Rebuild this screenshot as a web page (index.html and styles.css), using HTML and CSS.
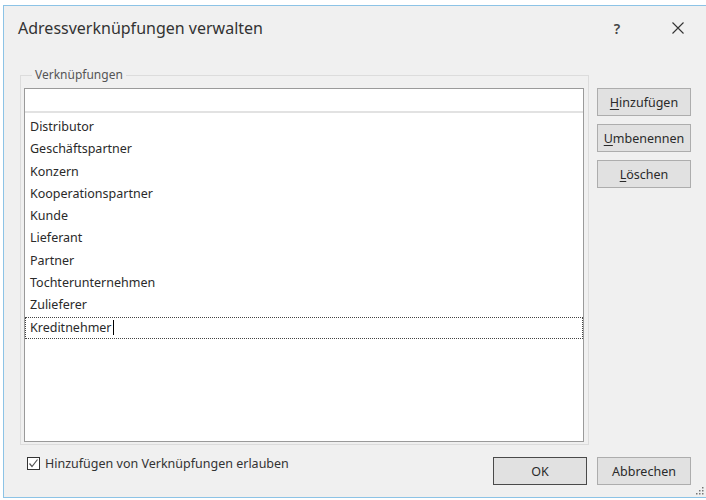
FILE: index.html
```html
<!DOCTYPE html>
<html lang="de">
<head>
<meta charset="utf-8">
<title>Adressverknüpfungen verwalten</title>
<link rel="stylesheet" href="styles.css">
</head>
<body>
<div class="window">
  <div class="titlebar">
    <span class="title">Adressverknüpfungen verwalten</span>
    <span class="help">?</span>
    <span class="close">
      <svg width="12" height="12" viewBox="0 0 12 12"><path d="M0.5 0.5 L11.5 11.5 M11.5 0.5 L0.5 11.5" stroke="#333" stroke-width="1.1" fill="none"/></svg>
    </span>
  </div>
  <div class="content">
    <div class="main">
      <fieldset class="group">
        <legend>Verknüpfungen</legend>
        <div class="listbox">
          <div class="edit"></div>
          <ul class="items">
            <li>Distributor</li>
            <li>Geschäftspartner</li>
            <li>Konzern</li>
            <li>Kooperationspartner</li>
            <li>Kunde</li>
            <li>Lieferant</li>
            <li>Partner</li>
            <li>Tochterunternehmen</li>
            <li>Zulieferer</li>
            <li class="editing">Kreditnehmer<span class="caret"></span></li>
          </ul>
        </div>
      </fieldset>
      <div class="side">
        <button class="btn"><u>H</u>inzufügen</button>
        <button class="btn"><u>U</u>mbenennen</button>
        <button class="btn"><u>L</u>öschen</button>
      </div>
    </div>
    <div class="footer">
      <label class="check">
        <span class="box"><svg width="11" height="11" viewBox="0 0 11 11"><path d="M1.5 5.5 L4 8.5 L9.5 1.5" stroke="#555" stroke-width="1.2" fill="none"/></svg></span>
        <span class="check-label">Hinzufügen von Verknüpfungen erlauben</span>
      </label>
      <div class="actions">
        <button class="btn default">OK</button>
        <button class="btn">Abbrechen</button>
      </div>
    </div>
  </div>
  <span class="grip">
    <svg width="8" height="8" viewBox="0 0 8 8" fill="#777">
      <rect x="6" y="0" width="1.5" height="1.5"/>
      <rect x="3" y="3" width="1.5" height="1.5"/><rect x="6" y="3" width="1.5" height="1.5"/>
      <rect x="0" y="6" width="1.5" height="1.5"/><rect x="3" y="6" width="1.5" height="1.5"/><rect x="6" y="6" width="1.5" height="1.5"/>
    </svg>
  </span>
</div>
</body>
</html>
```

FILE: styles.css
```css
* { box-sizing: border-box; }
html, body { margin: 0; padding: 0; background: #ffffff; }
body {
  font-family: "Noto Sans", "Open Sans", sans-serif;
  color: #222;
}
.window {
  position: relative;
  margin: 5px 0 0 3px;
  width: 703px;
  height: 493px;
  background: #f0f0f0;
  border-top: 1px solid #8cc3e6;
  border-left: 1px solid #8cc3e6;
  border-bottom: 1px solid #8cc3e6;
  display: flex;
  flex-direction: column;
}
.titlebar {
  height: 44px;
  display: flex;
  align-items: center;
  padding-left: 14px;
  padding-right: 5px;
}
.title {
  flex: 1;
  font-size: 16px;
  color: #333;
}
.help {
  width: 46px;
  text-align: center;
  font-size: 14px;
  font-weight: 600;
  color: #444;
  margin-right: 16px;
  padding-left: 2px;
}
.close {
  width: 46px;
  display: flex;
  justify-content: center;
  align-items: center;
}
.content {
  padding: 0 15px 0 16px;
  display: flex;
  flex-direction: column;
}
.main {
  display: flex;
  gap: 8px;
  margin-top: 18px;
}
.group {
  flex: 1;
  margin: 0;
  border: 1px solid #dcdcdc;
  padding: 6px 4px 2px 3px;
  min-width: 0;
}
.group legend {
  font-size: 12px;
  line-height: 14px;
  color: #555;
  padding: 0 3px;
  margin-left: 8px;
}
.listbox {
  height: 354px;
  background: #fff;
  border: 1px solid #9a9a9a;
  display: flex;
  flex-direction: column;
}
.edit {
  height: 24px;
  border-bottom: 2px solid #e2e2e2;
  flex: none;
}
.items {
  list-style: none;
  margin: 0;
  padding: 3px 0 0 0;
}
.items li {
  height: 22.3px;
  line-height: 22px;
  padding-left: 5px;
  font-size: 12.5px;
  color: #2a2a2a;
  white-space: nowrap;
}
.items li.editing {
  border: 1px dotted #444;
  padding-left: 4px;
  line-height: 20px;
}
.caret {
  display: inline-block;
  width: 1px;
  height: 15px;
  background: #000;
  vertical-align: -3px;
  margin-left: 1px;
}
.side {
  width: 94px;
  padding-top: 20px;
  display: flex;
  flex-direction: column;
  gap: 8px;
}
.btn {
  width: 94px;
  height: 28px;
  background: #e1e1e1;
  border: 1px solid #adadad;
  font-family: "Noto Sans", "Open Sans", sans-serif;
  font-size: 12.5px;
  color: #2a2a2a;
  padding: 0;
  border-radius: 0;
}
.btn.default {
  border: 1px solid #4a4a4a;
}
.btn u { text-underline-offset: 2px; }
.footer {
  display: flex;
  justify-content: space-between;
  align-items: flex-start;
  margin-top: 12px;
}
.check {
  display: flex;
  align-items: center;
  padding-left: 7px;
  gap: 5px;
  font-size: 12.5px;
  color: #333;
  height: 13px;
}
.box {
  width: 13px;
  height: 13px;
  border: 1px solid #333;
  background: #fff;
  display: flex;
  align-items: center;
  justify-content: center;
}
.actions {
  display: flex;
  gap: 10px;
}
.grip {
  position: absolute;
  right: 2px;
  bottom: 2px;
  display: flex;
}
```
